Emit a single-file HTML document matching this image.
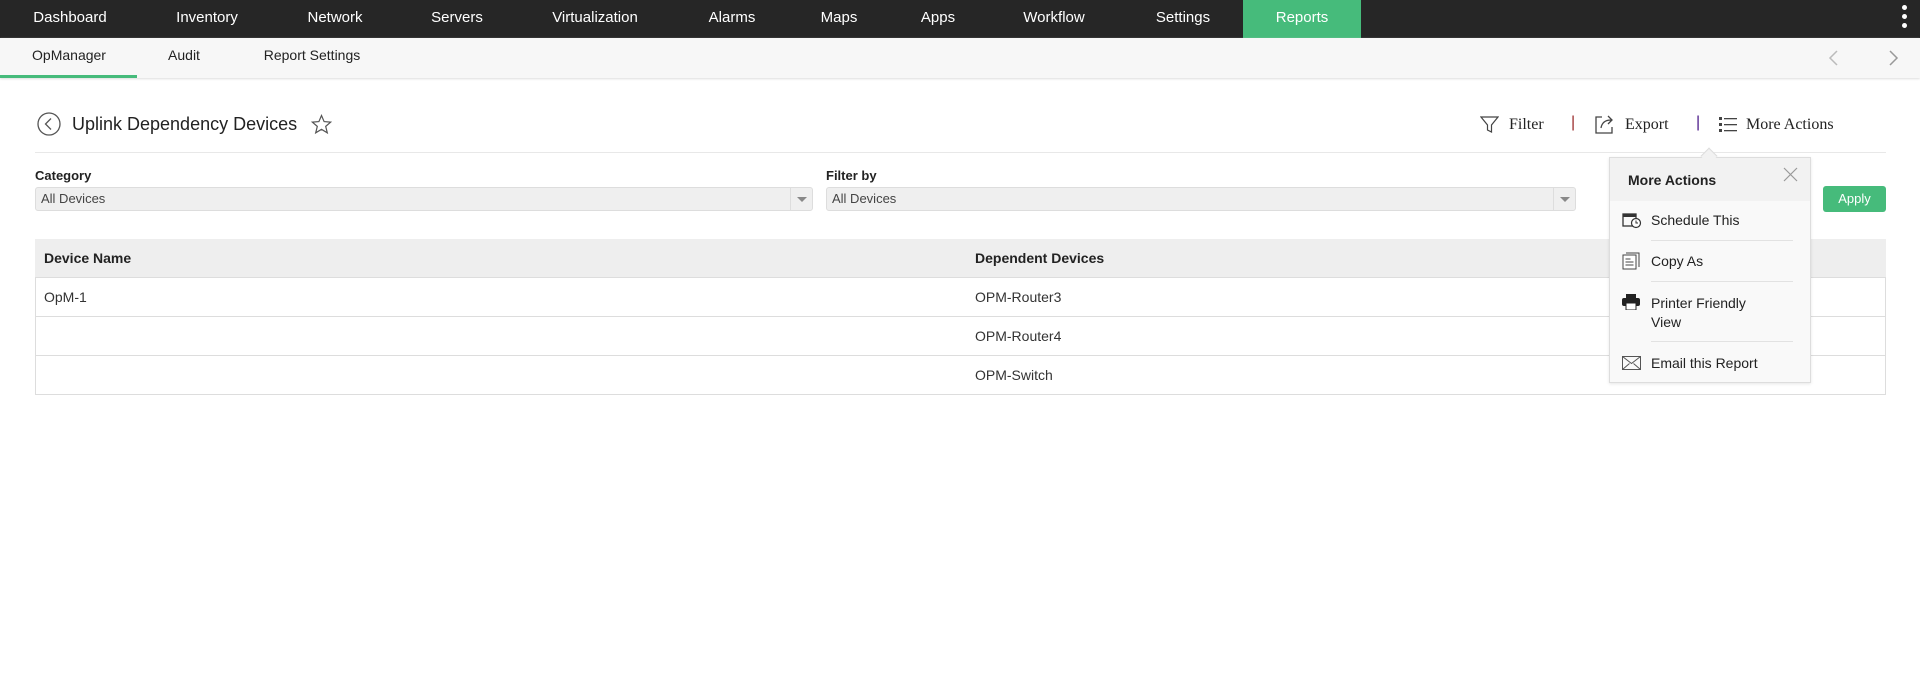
<!DOCTYPE html>
<html><head><meta charset="utf-8"><style>
*{margin:0;padding:0;box-sizing:border-box}
body{width:1920px;height:694px;background:#fff;font-family:"Liberation Sans",sans-serif;color:#222;position:relative;overflow:hidden}
.a{position:absolute;white-space:nowrap}
.nav{position:absolute;left:0;top:0;width:1920px;height:38px;background:#262626}
.nav span{position:absolute;top:0;line-height:36px;color:#fff;font-size:15px;transform:translateX(-50%)}
.sub{position:absolute;left:0;top:38px;width:1920px;height:40px;background:#f7f7f7;box-shadow:0 1px 2px #ddd}
.sub span{position:absolute;top:9px;font-size:14px;color:#222;transform:translateX(-50%)}
.serif{font-family:"Liberation Serif",serif;font-size:16px;color:#222}
.lbl{font-size:13px;font-weight:bold;color:#222}
.sel{position:absolute;height:24px;background:#efefef;border:1px solid #ddd;border-radius:3px;font-size:13px;color:#444;line-height:22px;padding-left:5px}
.sel i{position:absolute;right:0;top:0;width:22px;height:22px;border-left:1px solid #ddd}
.sel i:after{content:"";position:absolute;left:6px;top:9px;border:5px solid transparent;border-top:5px solid #888}
table{position:absolute;left:35px;top:239px;width:1851px;border-collapse:collapse;font-size:14px;color:#333}
td,th{border-top:1px solid #ddd;text-align:left;padding-left:9px;height:39px}
th{background:#eeeeee;height:38px;font-weight:bold;color:#222}
.tb{position:absolute;left:35px;top:239px;width:1851px;height:156px;border:1px solid #ddd}
.pop{position:absolute;left:1609px;top:157px;width:202px;height:226px;background:#f9f9f9;border:1px solid #ddd;box-shadow:0 1px 3px rgba(0,0,0,.1)}
.pop .h{height:43px;background:#f2f2f2;font-weight:bold;font-size:14px;padding:14px 0 0 18px}
.pop .it{position:absolute;left:41px;font-size:14px;color:#222}
.pop .ln{position:absolute;left:41px;width:142px;height:1px;background:#e2e2e2}
</style></head><body>
<div class="nav">
<span style="left:70px">Dashboard</span><span style="left:207px">Inventory</span><span style="left:335px">Network</span><span style="left:457px">Servers</span><span style="left:595px">Virtualization</span><span style="left:732px">Alarms</span><span style="left:839px">Maps</span><span style="left:938px">Apps</span><span style="left:1054px">Workflow</span><span style="left:1183px">Settings</span>
<div style="position:absolute;left:1243px;top:0;width:118px;height:38px;background:#46bb7b"></div><span style="left:1302px">Reports</span>
<div style="position:absolute;left:1902px;top:5px;width:5px;height:5px;border-radius:3px;background:#fff;box-shadow:0 9px 0 #fff,0 18px 0 #fff"></div>
</div>
<div class="sub">
<span style="left:69px">OpManager</span><span style="left:184px">Audit</span><span style="left:312px">Report Settings</span>
<div style="position:absolute;left:0;top:37px;width:137px;height:3px;background:#46bb7b"></div>
<svg class="a" style="left:1826px;top:11px" width="14" height="18"><path d="M11 2L4 9l7 7" stroke="#bbb" stroke-width="1.5" fill="none"/></svg>
<svg class="a" style="left:1887px;top:11px" width="14" height="18"><path d="M3 2l7 7-7 7" stroke="#999" stroke-width="1.5" fill="none"/></svg>
</div>
<svg class="a" style="left:37px;top:112px" width="24" height="24"><circle cx="12" cy="12" r="11" stroke="#555" stroke-width="1.3" fill="none"/><path d="M14 6.5L8.5 12l5.5 5.5" stroke="#555" stroke-width="1.3" fill="none"/></svg>
<div class="a" style="left:72px;top:114px;font-size:18px;color:#222">Uplink Dependency Devices</div>
<svg class="a" style="left:311px;top:114px" width="21" height="21"><path d="M10.5 1.5l2.6 6.1 6.6.5-5 4.3 1.6 6.4-5.8-3.5-5.8 3.5 1.6-6.4-5-4.3 6.6-.5z" stroke="#555" stroke-width="1.2" fill="none"/></svg>
<svg class="a" style="left:1480px;top:115px" width="19" height="19"><path d="M1 2h17l-6.5 8v7l-4-2v-5z" stroke="#444" stroke-width="1.2" fill="none"/></svg>
<div class="a serif" style="left:1509px;top:116px">Filter</div>
<div class="a" style="left:1571px;top:114px;color:#9b2c2c;font-size:16px">|</div>
<svg class="a" style="left:1593px;top:114px" width="21" height="21"><path d="M9 3H3v16h16v-6" stroke="#444" stroke-width="1.3" fill="none"/><path d="M8 14c1-6 5-8 10-8M15 2l4 4-4 4" stroke="#444" stroke-width="1.3" fill="none"/></svg>
<div class="a serif" style="left:1625px;top:116px">Export</div>
<div class="a" style="left:1696px;top:114px;color:#4b1a8a;font-size:16px">|</div>
<svg class="a" style="left:1719px;top:116px" width="18" height="17"><g fill="#444"><rect x="0" y="1" width="3" height="3"/><rect x="0" y="7" width="3" height="3"/><rect x="0" y="13" width="3" height="3"/><rect x="5" y="2" width="13" height="1.3"/><rect x="5" y="8" width="13" height="1.3"/><rect x="5" y="14" width="13" height="1.3"/></g></svg>
<div class="a serif" style="left:1746px;top:116px">More Actions</div>
<div class="a" style="left:35px;top:152px;width:1851px;height:1px;background:#e8e8e8"></div>
<div class="a lbl" style="left:35px;top:168px">Category</div>
<div class="sel" style="left:35px;top:187px;width:778px">All Devices<i></i></div>
<div class="a lbl" style="left:826px;top:168px">Filter by</div>
<div class="sel" style="left:826px;top:187px;width:750px">All Devices<i></i></div>
<div class="a" style="left:1823px;top:186px;width:63px;height:26px;background:#46bb7b;border-radius:3px;color:#fff;font-size:13px;text-align:center;line-height:26px">Apply</div>
<div class="tb"></div>
<table>
<tr><th style="width:931px;border-top:none">Device Name</th><th style="border-top:none">Dependent Devices</th></tr>
<tr><td>OpM-1</td><td>OPM-Router3</td></tr>
<tr><td></td><td>OPM-Router4</td></tr>
<tr><td></td><td>OPM-Switch</td></tr>
</table>
<div class="pop">
<div class="h">More Actions</div>
<svg class="a" style="left:173px;top:9px" width="15" height="15"><path d="M1 1l13 13M14 1L1 14" stroke="#999" stroke-width="1.2"/></svg>
<svg class="a" style="left:12px;top:53px" width="20" height="18"><rect x="1" y="3" width="13" height="12" fill="none" stroke="#333" stroke-width="1.3"/><rect x="1" y="3" width="13" height="3" fill="#333"/><circle cx="14" cy="12" r="4.5" fill="#fff" stroke="#333" stroke-width="1.2"/><path d="M14 9.5V12h2" stroke="#333" fill="none"/></svg>
<div class="it" style="top:54px">Schedule This</div>
<div class="ln" style="top:82px"></div>
<svg class="a" style="left:12px;top:94px" width="18" height="18"><rect x="1" y="3" width="13" height="14" fill="#fff" stroke="#444"/><path d="M4 1h13v14" stroke="#444" fill="none"/><path d="M3.5 7h5M3.5 10h8M3.5 13h8" stroke="#444"/></svg>
<div class="it" style="top:95px">Copy As</div>
<div class="ln" style="top:123px"></div>
<svg class="a" style="left:12px;top:136px" width="18" height="16"><rect x="4" y="0" width="10" height="4" fill="#222"/><rect x="0" y="4" width="18" height="8" rx="2" fill="#222"/><rect x="4" y="9" width="10" height="7" fill="#fff" stroke="#222"/></svg>
<div class="it" style="top:136px;line-height:19px">Printer Friendly<br>View</div>
<div class="ln" style="top:183px"></div>
<svg class="a" style="left:12px;top:198px" width="19" height="14"><rect x="0.5" y="0.5" width="18" height="13" fill="none" stroke="#555"/><path d="M0.5 0.5l9 7 9-7M0.5 13.5l7-6M18.5 13.5l-7-6" stroke="#555" fill="none"/></svg>
<div class="it" style="top:197px">Email this Report</div>
</div>
<div class="a" style="left:1703px;top:150px;width:12px;height:12px;background:#f2f2f2;border-left:1px solid #ddd;border-top:1px solid #ddd;transform:rotate(45deg)"></div>
</body></html>
